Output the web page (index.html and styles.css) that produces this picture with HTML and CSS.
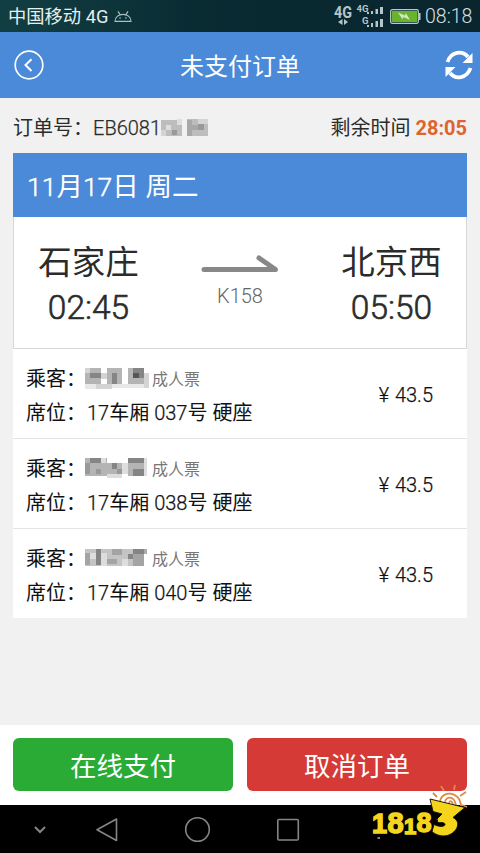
FILE: index.html
```html
<!DOCTYPE html>
<html lang="zh-CN">
<head>
<meta charset="utf-8">
<title>未支付订单</title>
<link rel="stylesheet" href="styles.css">
</head>
<body>
<div class="status">
  <span class="carrier">中国移动 4G</span>
  <svg class="droid" width="18" height="12" viewBox="0 0 18 12" fill="none" stroke="#a9c0c0" stroke-width="1.2"><path d="M1 10.4C1 1 17 1 17 10.4ZM4 .4l2 3.2M14 .4l-2 3.2"/><path d="M5.5 7h1.2M11.3 7h1.2" stroke-width="1.4"/></svg>
  <svg class="signals" width="50" height="28" viewBox="333 2 50 28" fill="#b5c6ca">
    <text x="333" y="18" class="net-big" textLength="18" lengthAdjust="spacingAndGlyphs">4G</text>
    <path d="M341.5 19v6l-4.5-3zM343 19v6l4-3z"/>
    <text x="355.500" y="11.500" class="net-small" textLength="12">4G</text>
    <text x="361" y="24" class="net-small">G</text>
    <path d="M366 12h2v2h-2zM370 11h2v3h-2zM374.500 9h2.500v5h-2.500zM379 7h3v7h-3zM366 25h2v2h-2zM370 23h2v4h-2zM374.500 21h2.500v6h-2.500zM379 19h3v8h-3z"/>
  </svg>
  <svg class="battery" width="31" height="15" viewBox="0 0 31 15"><rect x=".7" y=".7" width="27.600" height="13.600" rx="1.500" fill="#102b30" stroke="#b9cbc7" stroke-width="1.300"/><rect x="2" y="2" width="25" height="11" fill="#68b52b"/><path d="M29 4h1.500v7H29z" fill="#b9cbc7"/><path d="M8 3.500l7 3 .8-2.500L20 11l-6.500-3-1 2.300z" fill="#d5e6c8"/></svg>
  <span class="clock">08:18</span>
</div>
<header class="header">
  <svg width="30" height="30" viewBox="0 0 30 30" fill="none" stroke="#fff" stroke-width="1.700"><circle cx="15" cy="15" r="13.800"/><path d="M17.500 9.200L11.500 15l6 6" stroke-width="2"/></svg>
  <h1 class="title">未支付订单</h1>
  <svg width="28" height="30" viewBox="0 0 28 30"><path d="M2.500 12C6 1.500 17.500 0 23 7M25.500 18C22 28.500 10.500 30 5 23" fill="none" stroke="#fff" stroke-width="3.800"/><path d="M27.500 3v10h-10zM.5 27V17h10z" fill="#fff"/></svg>
</header>
<main class="content">
  <div class="order">
    <span>订单号：</span><span class="latin">EB6081</span>
    <svg class="mask" width="48" height="18" viewBox="0 0 48 18"><path fill="#bdbdbd" d="M0 1h21v16H0zM26 0h21v17H26z"/><path fill="#dedede" d="M5 6h5v5H5zM16 0h5v6h-5z"/><path fill="#999" d="M11 11h5v5h-5zM37 5h6v6h-6z"/><path fill="#a8a8a8" d="M26 1h5v16h-5zM31 6h6v5h-6z"/><path fill="#d4d4d4" d="M0 11h5v6H0zM37 0h10v5H37z"/></svg>
    <span class="remain">剩余时间 <b>28:05</b></span>
  </div>
  <section class="card">
    <div class="date"><span class="num">11</span>月<span class="num">17</span>日 周二</div>
    <div class="route">
      <div class="stop"><div class="city">石家庄</div><div class="time">02:45</div></div>
      <div class="train">
        <svg width="78" height="18" viewBox="0 0 78 18"><path d="M3 14.500h71.500L58 3" fill="none" stroke="#888" stroke-width="5" stroke-linecap="round" stroke-linejoin="round"/></svg>
        <div class="number">K158</div>
      </div>
      <div class="stop"><div class="city">北京西</div><div class="time">05:50</div></div>
    </div>
    <div class="passenger">
      <div>
        <div class="line">乘客：<svg class="name" width="64" height="21" viewBox="0 0 64 21"><path fill="#b4b4b4" d="M0 0h16v16H0zM22 0h15v16H22zM43 0h16v16H43z"/><path fill="#858585" d="M5 5h11v5H5zM27 5h5v11h-5zM48 0h11v10H48z"/><path fill="#555" d="M48 5h6v5h-6z"/><path fill="#d4d4d4" d="M16 5h6v6h-6zM0 0h5v5H0zM11 16h16v5H11zM59 5h5v15h-5z"/><path fill="#e8e8e8" d="M0 16h11v5H0zM27 16h32v4H27z"/></svg><span class="kind">成人票</span></div>
        <div class="line">席位：<span class="seat"><span class="num">17</span>车厢 <span class="num">037</span>号 硬座</span></div>
      </div>
      <div class="price">¥ 43.5</div>
    </div>
    <div class="passenger">
      <div>
        <div class="line">乘客：<svg class="name" width="64" height="21" viewBox="0 0 64 21"><path fill="#b4b4b4" d="M0 0h22v18H0zM22 5h15v12H22zM43 0h16v18H43z"/><path fill="#858585" d="M5 0h11v5H5zM27 5h5v6h-5zM43 0h16v5H43zM48 11h11v7H48z"/><path fill="#999" d="M0 5h5v11H0zM11 11h5v5h-5zM32 11h5v5h-5z"/><path fill="#ddd" d="M16 0h5v5h-5zM22 16h15v4H22zM37 5h6v11h-6zM59 0h3v18h-3z"/></svg><span class="kind">成人票</span></div>
        <div class="line">席位：<span class="seat"><span class="num">17</span>车厢 <span class="num">038</span>号 硬座</span></div>
      </div>
      <div class="price">¥ 43.5</div>
    </div>
    <div class="passenger">
      <div>
        <div class="line">乘客：<svg class="name" width="64" height="21" viewBox="0 0 64 21"><path fill="#c4c4c4" d="M0 1h59v17H0z"/><path fill="#858585" d="M11 1h5v16h-5zM48 1h11v6H48zM43 6h5v5h-5z"/><path fill="#a4a4a4" d="M0 5h5v12H0zM27 1h10v6H27zM22 11h10v5H22zM48 6h11v12H48z"/><path fill="#ddd" d="M5 5h6v6H5zM16 5h6v13h-6zM37 11h6v7h-6z"/><path fill="#aaa" d="M59 1h3v5h-3z"/></svg><span class="kind">成人票</span></div>
        <div class="line">席位：<span class="seat"><span class="num">17</span>车厢 <span class="num">040</span>号 硬座</span></div>
      </div>
      <div class="price">¥ 43.5</div>
    </div>
  </section>
</main>
<footer class="actions">
  <button class="btn pay">在线支付</button>
  <button class="btn cancel">取消订单</button>
</footer>
<nav class="nav">
  <svg width="380" height="48" viewBox="0 0 380 48" fill="none" stroke="#858585" stroke-width="1.600"><path d="M35 22l5 5 5-5" stroke-width="2"/><path d="M116.500 14v21.500L97 24.700z" stroke-linejoin="round"/><circle cx="197.500" cy="24.500" r="11.800"/><rect x="277.800" y="14.500" width="20.500" height="20.500" rx="1"/><path d="M379 15v2M379 23v2M379 32v2" stroke-width="3"/></svg>
  <svg class="watermark" width="96" height="58" viewBox="372 782 96 58">
    <g fill="none" stroke="#dc8a45" stroke-width="1.800"><path d="M440 803c0-13 20-13 21 3M445 803c0-7 9-8 11 2M449 803c1-3 3-2 4 1M433 793l4 4M441 786l3 5M454 790l1-5M460 796l6-4M462 805l5 2"/></g>
    <text class="logo" y="833"><tspan x="372" font-size="27">1</tspan><tspan x="387.500" font-size="29">8</tspan><tspan x="404" y="834" font-size="22">1</tspan><tspan x="416.500" y="832" font-size="27">8</tspan></text>
    <path d="M430 799l35 8.500-12 10c8 4 5 13-3 17-6 3-14 1-18-3l2-7c6 3 11 2 11 0s-3-2-7-2l-1-3.500 5-5-9-2.500z" fill="#f5d51b" stroke="#17180f" stroke-width="1"/>
  </svg>
</nav>
</body>
</html>
```
FILE: styles.css
```css
* { box-sizing: border-box; }
body {
  margin: 0;
  width: 480px;
  height: 853px;
  overflow: hidden;
  display: flex;
  flex-direction: column;
  background: #f1f1f1;
  color: #2b2b2b;
  font: 20px/30px Roboto, "Noto Sans CJK SC", sans-serif;
}
svg { display: block; flex: none; }
.status {
  height: 32px;
  flex: none;
  display: flex;
  align-items: center;
  padding: 0 8px;
  background: linear-gradient(90deg, #123f43, #082a31 45%, #0a252e);
  color: #e4eff0;
}
.carrier { font-size: 18.300px; width: 106px; padding-top: 2px; white-space: nowrap; }
.droid { margin-top: 2px; }
.signals { margin-left: auto; }
.net-big { font: bold 17px Roboto, sans-serif; }
.net-small { font: bold 9.5px Roboto, sans-serif; }
.battery { margin-left: 6px; }
.clock { width: 47px; margin-left: 4px; padding-top: 2px; font-size: 19.500px; font-weight: 300; color: #d5e0e3; }
.header {
  height: 66px;
  flex: none;
  display: flex;
  align-items: center;
  justify-content: space-between;
  padding: 0 7px 0 14px;
  background: #4b8ad8;
}
.title { margin: 0; padding: 4px 9px 0 0; font-size: 24px; font-weight: 400; color: #fff; }
.content { flex: 1; padding: 0 13px; }
.order { height: 55px; display: flex; align-items: center; padding-top: 5px; }
.latin, .num, .time, .price { font-weight: 300; -webkit-text-stroke: 0.25px currentColor; }
.mask { margin-left: 1px; }
.latin { width: 67px; }
.remain { margin-left: auto; white-space: nowrap; }
.remain b { color: #e0622c; }
.card { background: #fff; }
.date {
  height: 64px;
  padding: 3px 14px 0;
  background: #4b8ad8;
  color: #fff;
  font-size: 26.500px;
  line-height: 62px;
}
.date .num { -webkit-text-stroke-width: 0.5px; }
.route {
  height: 132px;
  display: flex;
  justify-content: space-between;
  padding: 23px 24px 0;
  border: 1px solid #d8d8d8;
  border-top: 0;
}
.stop { width: 101px; text-align: center; }
.city { font-size: 33.500px; line-height: 46px; white-space: nowrap; }
.time { font-size: 33.500px; line-height: 43px; -webkit-text-stroke-width: 0.6px; }
.train { padding-top: 15px; display: flex; flex-direction: column; align-items: center; }
.number { margin-top: 8px; font-weight: 300; color: #666; }
.passenger {
  height: 90px;
  display: flex;
  justify-content: space-between;
  align-items: center;
  padding: 5px 34px 0 13px;
  border-bottom: 1px solid #e4e4e4;
  color: #111;
}
.passenger:last-child { height: 89px; border-bottom: 0; }
.line { height: 34px; display: flex; align-items: center; white-space: nowrap; }
.name { margin: -2px 0 0 -1px; }
.kind { margin-left: 3px; padding-top: 1px; font-size: 16px; color: #777; }
.seat { margin-left: 1px; }
.price { margin-top: -2px; word-spacing: 1px; }
.actions {
  height: 80px;
  flex: none;
  display: flex;
  gap: 14px;
  padding: 13px 13px 14px;
  background: #fff;
}
.btn {
  flex: 1;
  border: 0;
  border-radius: 6px;
  color: #fff;
  font: 26.500px/53px Roboto, "Noto Sans CJK SC", sans-serif;
  padding: 2px 0 0;
}
.pay { background: #29ab35; }
.cancel { background: #d63a36; }
.nav { position: relative; height: 48px; flex: none; background: #000; }
.watermark { position: absolute; left: 372px; top: -23px; }
.logo {
  font-family: "Liberation Sans", sans-serif;
  font-weight: bold;
  fill: #f5d51b;
  stroke: #f5d51b;
  stroke-width: 1.5px;
}
```
